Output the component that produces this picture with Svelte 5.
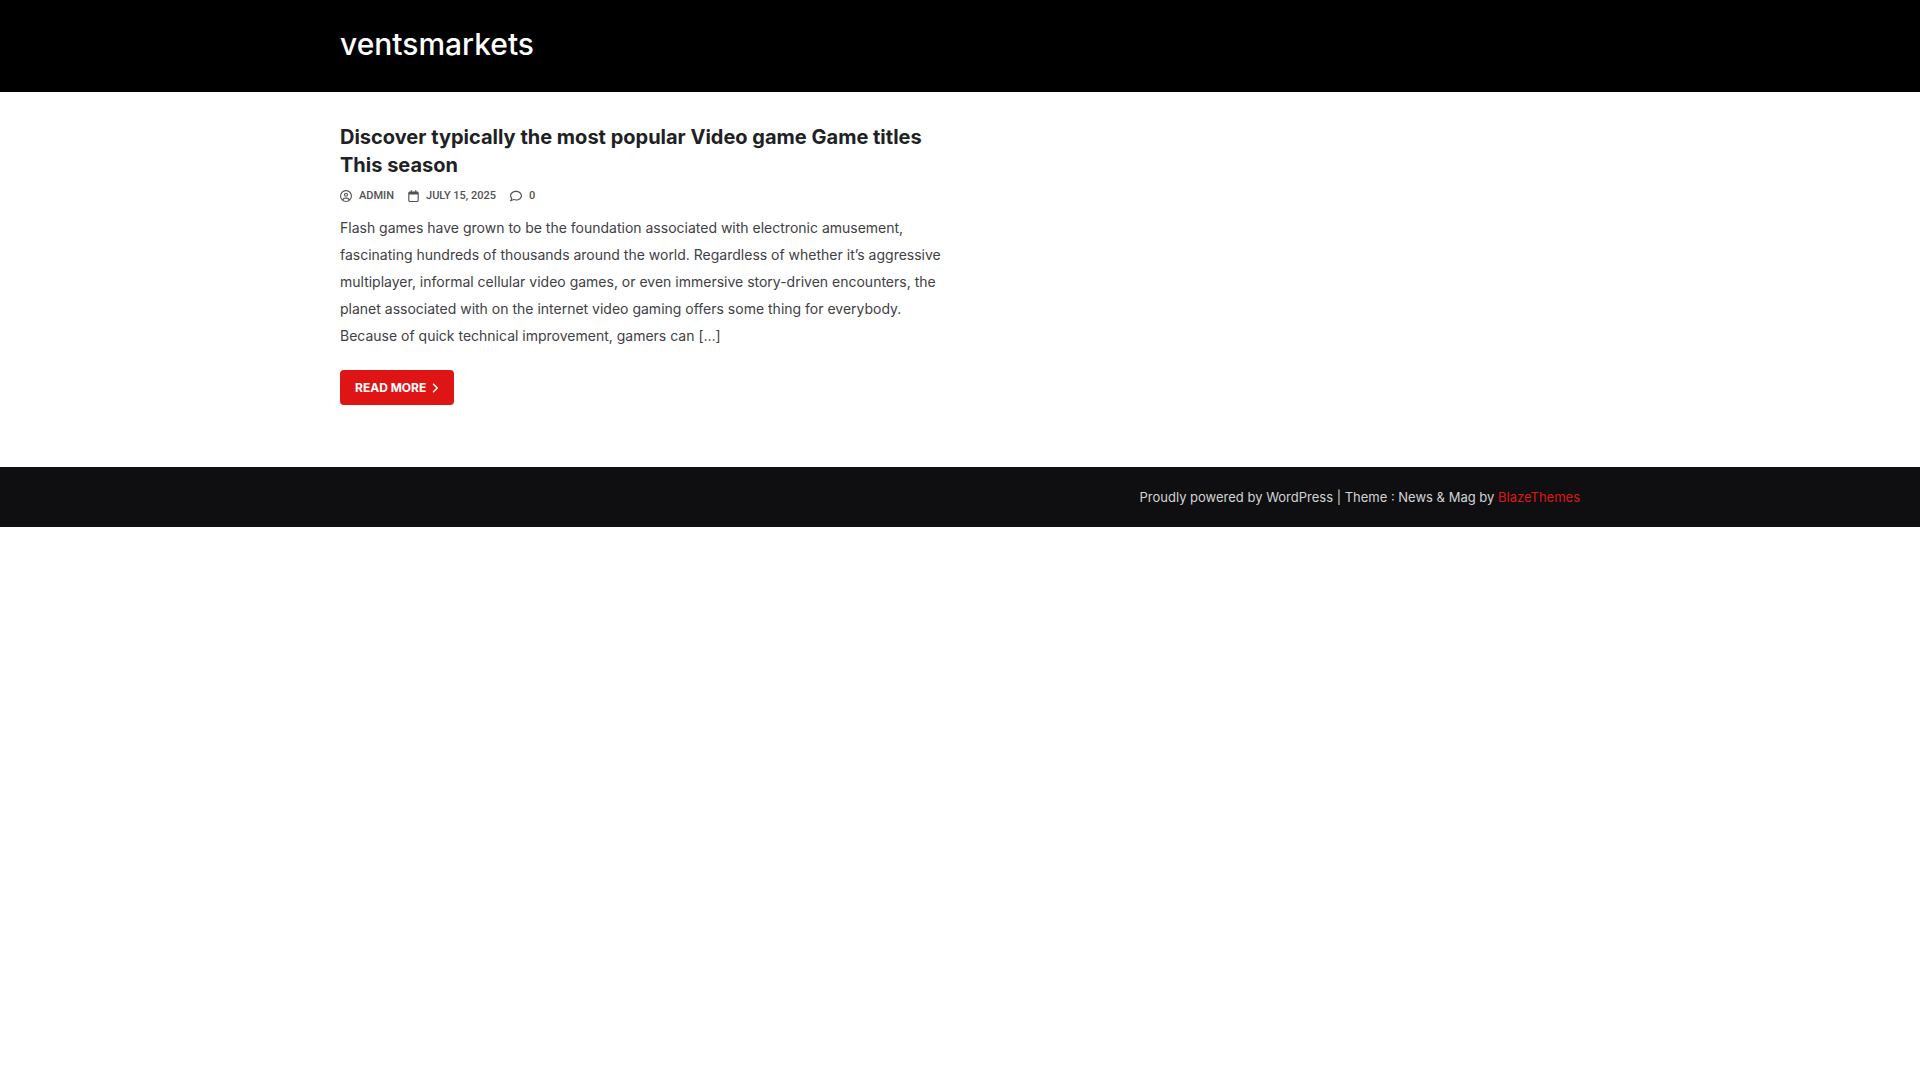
<script lang="ts">
type Post = {
	title: string;
	url: string;
	author: string;
	date: string;
	datetime: string;
	comments: number;
	excerpt: string;
};

const siteTitle = "ventsmarkets";

const posts: Post[] = [
	{
		title: "Discover typically the most popular Video game Game titles This season",
		url: "#post",
		author: "Admin",
		date: "July 15, 2025",
		datetime: "2025-07-15",
		comments: 0,
		excerpt:
			"Flash games have grown to be the foundation associated with electronic amusement, fascinating hundreds of thousands around the world. Regardless of whether it’s aggressive multiplayer, informal cellular video games, or even immersive story-driven encounters, the planet associated with on the internet video gaming offers some thing for everybody. Because of quick technical improvement, gamers can […]",
	},
];
</script>

<header class="site-header">
	<div class="container">
		<p class="site-title"><a href="#home">{siteTitle}</a></p>
	</div>
</header>

<main class="container post-list">
	{#each posts as post (post.url)}
		<article>
			<h2><a href={post.url}>{post.title}</a></h2>
			<div class="post-meta">
				<a href="#author">
					<svg viewBox="0 0 512 512" width="12" height="12" aria-hidden="true">
						<path d="M406.5 399.6C387.4 352.9 341.5 320 288 320H224c-53.5 0-99.4 32.9-118.5 79.6C69.9 362.2 48 311.7 48 256C48 141.1 141.1 48 256 48s208 93.1 208 208c0 55.7-21.9 106.2-57.5 143.6zm-40.1 32.7C334.4 452.4 296.6 464 256 464s-78.4-11.6-110.5-31.7c7.3-36.7 39.7-64.3 78.5-64.3h64c38.8 0 71.2 27.6 78.5 64.3zM256 512A256 256 0 1 0 256 0a256 256 0 1 0 0 512zm0-272a40 40 0 1 1 0-80 40 40 0 1 1 0 80zm-88-40a88 88 0 1 0 176 0 88 88 0 1 0 -176 0z" />
					</svg>
					<span>{post.author}</span>
				</a>
				<a href="#date">
					<svg viewBox="0 0 448 512" width="11" height="12" aria-hidden="true">
						<path d="M152 24c0-13.3-10.7-24-24-24s-24 10.7-24 24V64H64C28.7 64 0 92.7 0 128v16 48V448c0 35.3 28.7 64 64 64H384c35.3 0 64-28.7 64-64V192 144 128c0-35.3-28.7-64-64-64H344V24c0-13.3-10.7-24-24-24s-24 10.7-24 24V64H152V24zM48 192H400V448c0 8.8-7.2 16-16 16H64c-8.8 0-16-7.2-16-16V192z" />
					</svg>
					<time datetime={post.datetime}>{post.date}</time>
				</a>
				<a href="#comments" aria-label="{post.comments} comments">
					<svg viewBox="0 0 512 512" width="12" height="12" aria-hidden="true">
						<path d="M123.6 391.3c12.9-9.4 29.6-11.8 44.6-6.4c26.5 9.6 56.2 15.1 87.8 15.1c124.7 0 208-80.5 208-160s-83.3-160-208-160S48 160.5 48 240c0 32 12.4 62.8 35.7 89.2c8.6 9.7 12.8 22.5 11.8 35.5c-1.4 18.1-5.7 34.7-11.3 49.4c17-7.9 31.1-16.7 39.4-22.7zM21.2 431.9c1.8-2.7 3.5-5.4 5.1-8.1c10-16.6 19.5-38.4 21.4-62.9C17.7 326.8 0 285.1 0 240C0 125.1 114.6 32 256 32s256 93.1 256 208s-114.6 208-256 208c-37.1 0-72.3-6.4-104.1-17.9c-11.9 8.7-31.3 20.6-54.3 30.6c-15.1 6.6-32.3 12.6-50.1 16.1c-.8 .2-1.6 .3-2.4 .5c-4.4 .8-8.7 1.5-13.2 1.9c-.2 0-.5 .1-.7 .1c-5.1 .5-10.2 .8-15.3 .8c-6.5 0-12.3-3.9-14.8-9.9c-2.5-6-1.1-12.8 3.4-17.4c4.1-4.2 7.8-8.7 11.3-13.5c1.7-2.3 3.3-4.6 4.8-6.9l.3-.5z" />
					</svg>
					<span>{post.comments}</span>
				</a>
			</div>
			<p class="excerpt">{post.excerpt}</p>
			<a class="read-more" href={post.url}>
				Read More
				<svg viewBox="0 0 320 512" width="8" height="12" aria-hidden="true">
					<path d="M278.6 233.4c12.5 12.5 12.5 32.8 0 45.3l-160 160c-12.5 12.5-32.8 12.5-45.3 0s-12.5-32.8 0-45.3L210.7 256 73.4 118.6c-12.5-12.5-12.5-32.8 0-45.3s32.8-12.5 45.3 0l160 160z" />
				</svg>
			</a>
		</article>
	{/each}
</main>

<footer class="site-footer">
	<div class="container">
		Proudly powered by WordPress | Theme : News &amp; Mag by <a href="#theme">BlazeThemes</a>
	</div>
</footer>

<style>
	:global(body) {
		margin: 0;
		background: #fff;
		color: #404046;
		font-family: Inter, "Liberation Sans", sans-serif;
	}

	a {
		color: inherit;
		text-decoration: none;
	}

	svg {
		flex: none;
		fill: currentColor;
	}

	.container {
		box-sizing: border-box;
		max-width: 1280px;
		margin: 0 auto;
		padding: 0 20px;
	}

	.site-header {
		padding: 24px 0 28px;
		background: #000;
		color: #fff;
	}

	.site-title {
		margin: 0;
		font-size: 30px;
		font-weight: 500;
		line-height: 40px;
	}

	.post-list {
		display: grid;
		grid-template-columns: repeat(2, minmax(0, 1fr));
		gap: 20px;
		padding-top: 31px;
		padding-bottom: 62px;
	}

	h2 {
		margin: 0;
		color: #202124;
		font-size: 20px;
		font-weight: 700;
		line-height: 28px;
	}

	.post-meta {
		display: flex;
		flex-wrap: wrap;
		gap: 14px;
		margin-top: 9px;
		color: #525252;
		font-family: Roboto, "Liberation Sans", sans-serif;
		font-size: 11px;
		font-weight: 500;
		line-height: 16px;
		text-transform: uppercase;
	}

	.post-meta a {
		display: flex;
		align-items: center;
		gap: 7px;
	}

	.excerpt {
		margin: 10px 0 21px;
		font-size: 14px;
		line-height: 27px;
	}

	.read-more {
		display: inline-flex;
		align-items: center;
		gap: 5px;
		padding: 0 15px;
		border-radius: 4px;
		background: #df1515;
		color: #fff;
		font-size: 12px;
		font-weight: 700;
		line-height: 35px;
		text-transform: uppercase;
		vertical-align: top;
	}

	.site-footer {
		padding: 20px 0;
		background: #0f0f11;
		color: #d4d4d4;
		font-size: 13px;
		line-height: 20px;
		text-align: right;
	}

	.site-footer a {
		color: #df1515;
	}

	a:hover {
		text-decoration: underline;
	}

	@media (max-width: 768px) {
		.post-list {
			grid-template-columns: 1fr;
		}
	}
</style>
